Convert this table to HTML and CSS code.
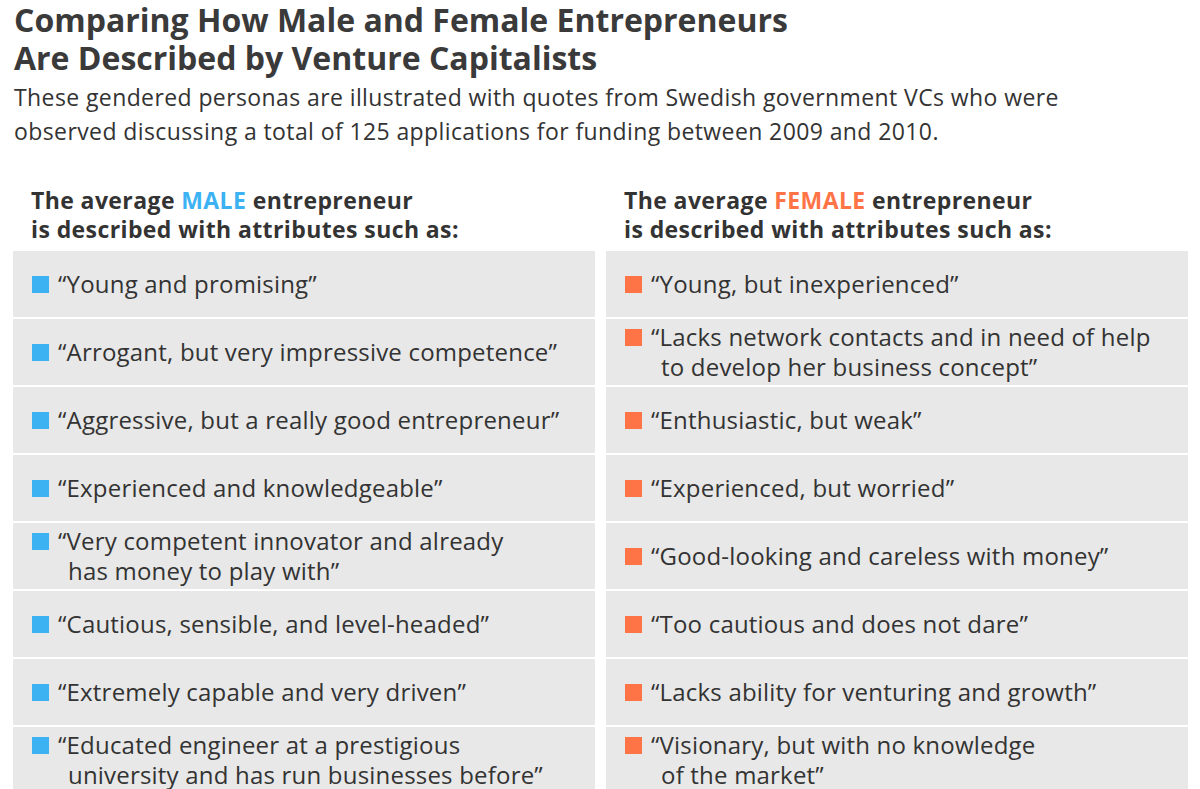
FILE: index.html
```html
<!DOCTYPE html>
<html lang="en">
<head>
<meta charset="utf-8">
<title>Comparing How Male and Female Entrepreneurs Are Described by Venture Capitalists</title>
<link rel="stylesheet" href="styles.css">
</head>
<body>
<div class="page">
  <h1 class="title">Comparing How Male and Female Entrepreneurs<br>Are Described by Venture Capitalists</h1>
  <p class="subtitle">These gendered personas are illustrated with quotes from Swedish government VCs who were<br>observed discussing a total of 125 applications for funding between 2009 and 2010.</p>
  <div class="columns">
    <section class="col male">
      <h2 class="col-head">The average <span class="hl">MALE</span> entrepreneur<br>is described with attributes such as:</h2>
      <ul class="list">
        <li class="row"><div class="item"><span class="sq"></span><span class="q">“Young and promising”</span></div></li>
        <li class="row"><div class="item"><span class="sq"></span><span class="q">“Arrogant, but very impressive competence”</span></div></li>
        <li class="row"><div class="item"><span class="sq"></span><span class="q">“Aggressive, but a really good entrepreneur”</span></div></li>
        <li class="row"><div class="item"><span class="sq"></span><span class="q">“Experienced and knowledgeable”</span></div></li>
        <li class="row"><div class="item"><span class="sq"></span><span class="q">“Very competent innovator and already<br>has money to play with”</span></div></li>
        <li class="row"><div class="item"><span class="sq"></span><span class="q">“Cautious, sensible, and level-headed”</span></div></li>
        <li class="row"><div class="item"><span class="sq"></span><span class="q">“Extremely capable and very driven”</span></div></li>
        <li class="row"><div class="item"><span class="sq"></span><span class="q">“Educated engineer at a prestigious<br>university and has run businesses before”</span></div></li>
      </ul>
    </section>
    <section class="col female">
      <h2 class="col-head">The average <span class="hl">FEMALE</span> entrepreneur<br>is described with attributes such as:</h2>
      <ul class="list">
        <li class="row"><div class="item"><span class="sq"></span><span class="q">“Young, but inexperienced”</span></div></li>
        <li class="row"><div class="item"><span class="sq"></span><span class="q">“Lacks network contacts and in need of help<br>to develop her business concept”</span></div></li>
        <li class="row"><div class="item"><span class="sq"></span><span class="q">“Enthusiastic, but weak”</span></div></li>
        <li class="row"><div class="item"><span class="sq"></span><span class="q">“Experienced, but worried”</span></div></li>
        <li class="row"><div class="item"><span class="sq"></span><span class="q">“Good-looking and careless with money”</span></div></li>
        <li class="row"><div class="item"><span class="sq"></span><span class="q">“Too cautious and does not dare”</span></div></li>
        <li class="row"><div class="item"><span class="sq"></span><span class="q">“Lacks ability for venturing and growth”</span></div></li>
        <li class="row"><div class="item"><span class="sq"></span><span class="q">“Visionary, but with no knowledge<br>of the market”</span></div></li>
      </ul>
    </section>
  </div>
</div>
</body>
</html>
```
FILE: styles.css
```css
html, body {
  margin: 0;
  padding: 0;
  background: #ffffff;
}
body {
  font-family: "Open Sans", "Liberation Sans", sans-serif;
  color: #333333;
  overflow: hidden;
  height: 789px;
}
.page {
  padding: 1px 0 0 13px;
  width: 1175px;
}
.title {
  margin: 0 0 0 1px;
  font-size: 32px;
  line-height: 38px;
  font-weight: 700;
  color: #3a3a3a;
}
.subtitle {
  margin: 3px 0 0 1px;
  font-size: 23px;
  line-height: 34px;
  font-weight: 400;
  color: #333333;
  letter-spacing: 0.4px;
}
.columns {
  margin-top: 38px;
  display: grid;
  grid-template-columns: 582px 582px;
  column-gap: 11px;
}
.col-head {
  margin: 0 0 0 18px;
  font-size: 23px;
  line-height: 29px;
  font-weight: 700;
  color: #333333;
  height: 65px;
  letter-spacing: 0.4px;
}
.male .hl { color: #3db2f2; }
.female .hl { color: #ff7447; }
.list {
  list-style: none;
  margin: 0;
  padding: 0;
  display: flex;
  flex-direction: column;
  gap: 2px;
}
.row {
  background: #e8e8e8;
  height: 66px;
  display: flex;
  align-items: center;
  padding-left: 19px;
  box-sizing: border-box;
}
.item {
  display: flex;
  align-items: flex-start;
}
.sq {
  flex: 0 0 17px;
  width: 17px;
  height: 17px;
  margin-right: 9px;
  margin-top: 7px;
}
.male .sq { background: #3db2f2; }
.female .sq { background: #ff7447; }
.q {
  font-size: 24px;
  line-height: 30px;
  color: #333333;
  padding-left: 10px;
  text-indent: -10px;
  letter-spacing: 0.2px;
}
```
